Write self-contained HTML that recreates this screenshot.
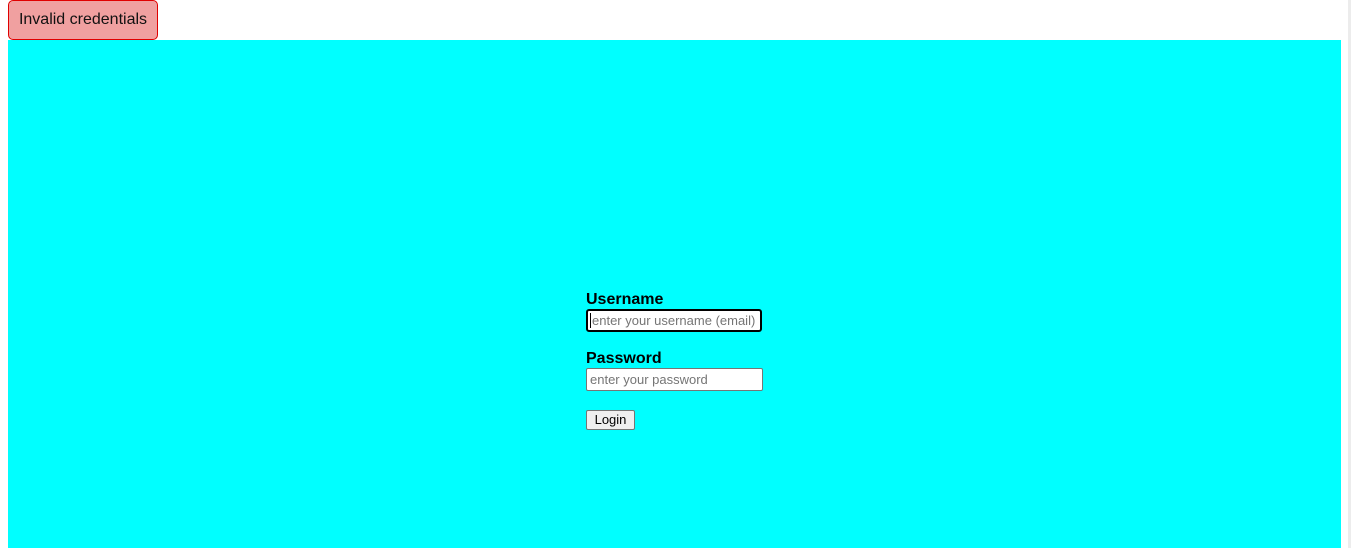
<!DOCTYPE html>
<html><head><style>
html,body{margin:0;padding:0;background:#fff;width:1351px;height:548px;overflow:hidden;font-family:"Liberation Sans",Arial,sans-serif;}
.sb{position:absolute;left:1348px;top:0;width:3px;height:548px;background:#ececec;}
.toast{position:absolute;left:8px;top:0;width:148px;height:38px;background:#f0a0a0;border:1px solid #e00000;border-radius:5px;font-size:16px;line-height:38px;text-align:center;color:#111;}
.main{position:absolute;left:8px;top:40px;width:1333px;height:508px;background:#00ffff;}
.lbl{position:absolute;left:586px;font-weight:bold;font-size:16px;color:#000;}
.inp{position:absolute;left:586px;width:172px;height:21px;background:#fff;border:1px solid #767676;border-radius:2px;font-size:13px;color:#757575;line-height:21px;padding-left:3px;box-sizing:content-box;}
.focus{border:2px solid #000;width:170px;height:19px;line-height:19px;border-radius:3px;padding-left:2px;}
.btn{position:absolute;left:586px;top:410px;width:47px;height:18px;background:#efefef;border:1px solid #767676;border-radius:2px;font-size:13px;line-height:18px;text-align:center;color:#000;}
</style></head><body>
<div class="main"></div>
<div class="toast">Invalid credentials</div>
<div class="sb"></div>
<div class="lbl" style="top:291px">Username</div>
<div class="inp focus" style="top:309px"><span style="border-left:1px solid #000;padding-left:1px">enter your username (email)</span></div>
<div class="lbl" style="top:350px">Password</div>
<div class="inp" style="top:368px">enter your password</div>
<div class="btn">Login</div>
</body></html>
